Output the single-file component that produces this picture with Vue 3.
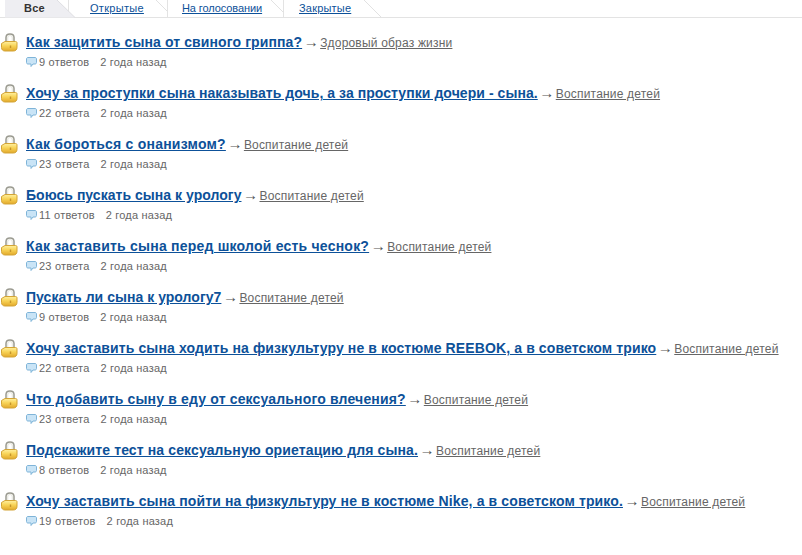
<script setup>
const tabs = [
  { label: 'Все', active: true, w: 63, pad: 19, fold: 18, ls: 0.2 },
  { label: 'Открытые', w: 99, pad: 21, fold: 12, ls: 0.3 },
  { label: 'На голосовании', w: 116, pad: 14, fold: 13, ls: -0.09 },
  { label: 'Закрытые', w: 97, pad: 15, fold: 17, ls: 0.2 },
]
const rows = [
  ['Как защитить сына от свиного гриппа?', 'Здоровый образ жизни', '9 ответов', 0.105],
  ['Хочу за проступки сына наказывать дочь, а за проступки дочери - сына.', 'Воспитание детей', '22 ответа', 0.06],
  ['Как бороться с онанизмом?', 'Воспитание детей', '23 ответа', 0.225],
  ['Боюсь пускать сына к урологу', 'Воспитание детей', '11 ответов', 0.035],
  ['Как заставить сына перед школой есть чеснок?', 'Воспитание детей', '23 ответа', 0.22],
  ['Пускать ли сына к урологу7', 'Воспитание детей', '9 ответов', 0.03],
  ['Хочу заставить сына ходить на физкультуру не в костюме REEBOK, а в советском трико', 'Воспитание детей', '22 ответа', 0.117],
  ['Что добавить сыну в еду от сексуального влечения?', 'Воспитание детей', '23 ответа', 0.166],
  ['Подскажите тест на сексуальную ориетацию для сына.', 'Воспитание детей', '8 ответов', 0.125],
  ['Хочу заставить сына пойти на физкультуру не в костюме Nike, а в советском трико.', 'Воспитание детей', '19 ответов', 0.13],
]
</script>

<template>
  <div class="page">
    <svg width="0" height="0" class="defs">
      <defs>
        <linearGradient id="lockBody" x1="0" y1="0" x2="0" y2="1">
          <stop offset="0" stop-color="#fff0a0" />
          <stop offset=".45" stop-color="#f8d458" />
          <stop offset="1" stop-color="#e2a82a" />
        </linearGradient>
      </defs>
    </svg>
    <nav class="tabs">
      <a
        v-for="t in tabs"
        :key="t.label"
        class="tab"
        :class="{ active: t.active }"
        :style="{ width: t.w + 'px', paddingLeft: t.pad + 'px', letterSpacing: t.ls + 'px' }"
      >
        <svg v-if="t.active" class="shape" :width="t.w + 8" height="18">
          <path :d="`M0 0H${t.w - 11}L${t.w + 7} 17.5H0Z`" fill="#eeeef2" />
          <path :d="`M${t.w - 11} 0L${t.w + 7} 17.5`" fill="none" stroke="#dedee2" />
        </svg>
        <svg v-else class="shape" :width="t.w" height="18">
          <path :d="`M${t.w - t.fold} 0L${t.w} ${t.fold}`" fill="none" stroke="#e2e2e2" />
        </svg>
        <span class="tab-label">{{ t.label }}</span>
      </a>
    </nav>
    <ul class="list">
      <li v-for="(r, i) in rows" :key="i" class="row">
        <svg class="lock" width="18" height="19" viewBox="0 0 18 19">
          <path d="M6 10V4.5C6 2.3 7.5 1 10 1S14 2.3 14 4.5V9" fill="none" stroke="#9a9a90" stroke-width="1.5" />
          <path d="M7.7 10V4.7C7.7 3.3 8.6 2.5 10 2.5S12.3 3.3 12.3 4.7V9" fill="none" stroke="#e8e8e0" stroke-width="1.2" />
          <path d="M1.5 10.5L5 8.5H15.5C16.5 8.5 17 9 17 10V14.5C17 16.5 15.5 18 13.5 18H5C2.8 18 1.5 16.5 1.5 14.5Z" fill="url(#lockBody)" stroke="#d3a436" />
          <path d="M10.5 12.5V15" stroke="#c4952c" stroke-width="1.4" />
        </svg>
        <div class="body">
          <div class="line">
            <a class="title" :style="{ letterSpacing: r[3] + 'px' }">{{ r[0] }}</a>
            <span class="arrow">→</span>
            <a class="cat">{{ r[1] }}</a>
          </div>
          <div class="meta">
            <svg class="bubble" width="11" height="10" viewBox="0 0 11 10">
              <path d="M2 .5H9C9.9 .5 10.5 1.1 10.5 2V5.5C10.5 6.4 9.9 7 9 7H7L5 9.5V7H2C1.1 7 .5 6.4 .5 5.5V2C.5 1.1 1.1 .5 2 .5Z" fill="#c9e4f6" stroke="#7fb4d8" />
            </svg>
            <span class="count">{{ r[2] }}</span>
            <span class="age">2 года назад</span>
          </div>
        </div>
      </li>
    </ul>
  </div>
</template>

<style>
html, body { background: #fff; }
</style>

<style scoped>
.page {
  width: 802px;
  height: 555px;
  overflow: hidden;
  background: #fff;
  font-family: "Liberation Sans", Arial, sans-serif;
}
.defs { position: absolute; }
.tabs {
  display: flex;
  height: 17px;
  border-bottom: 1px solid #e3e3e3;
  padding-left: 5px;
}
.tab {
  position: relative;
  display: block;
  flex: none;
  height: 17px;
  font-size: 11px;
  line-height: 16px;
  color: #0d5199;
  box-sizing: border-box;
  border-left: 1px solid #e3e3e3;
}
.tab.active {
  border-left: 0;
  color: #333;
  font-weight: bold;
  z-index: 1;
}
.shape { position: absolute; left: 0; top: 0; }
.tab-label { text-decoration: underline; position: relative; z-index: 1; }
.active .tab-label { text-decoration: none; }
.list {
  list-style: none;
  margin: 0;
  padding: 15px 0 0;
}
.row {
  display: flex;
  height: 51px;
}
.lock { flex: none; margin: 0 8px 0 0; }
.line { height: 20px; line-height: 20px; font-size: 12px; white-space: nowrap; margin-top: -1px; }
.title {
  font-size: 14px;
  font-weight: bold;
  color: #0d5199;
  text-decoration: underline;
}
.arrow { color: #555; font-size: 15px; margin: 0 1.5px; }
.cat { color: #666; text-decoration: underline; letter-spacing: .19px; }
.meta {
  display: flex;
  align-items: center;
  height: 14px;
  margin-top: 3px;
  font-size: 11px;
  letter-spacing: .2px;
  color: #666;
}
.bubble { margin-right: 2px; }
.count { margin-right: 11px; }
</style>
